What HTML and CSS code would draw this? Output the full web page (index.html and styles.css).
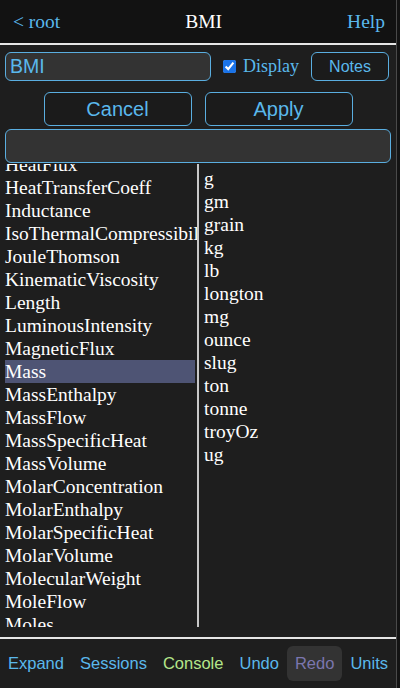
FILE: index.html
```html
<!DOCTYPE html>
<html>
<head>
<meta charset="utf-8">
<link rel="stylesheet" href="styles.css">
</head>
<body>
<div class="app">
  <header class="topbar">
    <span class="nav-link">&lt; root</span>
    <span class="title">BMI</span>
    <span class="nav-link">Help</span>
  </header>
  <div class="row-name">
    <input class="name-input" type="text" value="BMI">
    <input class="check" type="checkbox" checked>
    <span class="check-label">Display</span>
    <button class="btn btn-notes">Notes</button>
  </div>
  <div class="row-actions">
    <button class="btn btn-wide">Cancel</button>
    <button class="btn btn-wide">Apply</button>
  </div>
  <input class="search" type="text">
  <div class="lists">
    <div class="col-left">
      <ul class="list list-scrolled">
        <li>HeatFlux</li>
        <li>HeatTransferCoeff</li>
        <li>Inductance</li>
        <li>IsoThermalCompressibility</li>
        <li>JouleThomson</li>
        <li>KinematicViscosity</li>
        <li>Length</li>
        <li>LuminousIntensity</li>
        <li>MagneticFlux</li>
        <li class="selected">Mass</li>
        <li>MassEnthalpy</li>
        <li>MassFlow</li>
        <li>MassSpecificHeat</li>
        <li>MassVolume</li>
        <li>MolarConcentration</li>
        <li>MolarEnthalpy</li>
        <li>MolarSpecificHeat</li>
        <li>MolarVolume</li>
        <li>MolecularWeight</li>
        <li>MoleFlow</li>
        <li>Moles</li>
        <li>Power</li>
      </ul>
    </div>
    <div class="divider"></div>
    <div class="col-right">
      <ul class="list">
        <li>g</li>
        <li>gm</li>
        <li>grain</li>
        <li>kg</li>
        <li>lb</li>
        <li>longton</li>
        <li>mg</li>
        <li>ounce</li>
        <li>slug</li>
        <li>ton</li>
        <li>tonne</li>
        <li>troyOz</li>
        <li>ug</li>
      </ul>
    </div>
  </div>
  <footer class="toolbar">
    <span class="tool">Expand</span>
    <span class="tool">Sessions</span>
    <span class="tool tool-console">Console</span>
    <span class="tool">Undo</span>
    <span class="tool tool-redo">Redo</span>
    <span class="tool">Units</span>
  </footer>
</div>
</body>
</html>
```

FILE: styles.css
```css
html, body {
  margin: 0;
  padding: 0;
  background: #131313;
}
.app {
  width: 396px;
  height: 688px;
  background: #1e1e1e;
  border-right: 1px solid #4a4a4a;
  display: flex;
  flex-direction: column;
  font-family: "Liberation Serif", "Times New Roman", serif;
  color: #ffffff;
  overflow: hidden;
}
.topbar {
  height: 43px;
  background: #121212;
  border-bottom: 2px solid #e6e6e6;
  display: flex;
  align-items: center;
  justify-content: space-between;
  padding: 0 11px 0 13px;
  font-size: 19.5px;
  flex: none;
}
.nav-link { color: #5ab8ec; }
.title { color: #ffffff; }

.row-name {
  display: flex;
  align-items: center;
  margin-top: 7px;
  padding: 0 7px 0 5px;
  height: 29px;
  flex: none;
}
.name-input {
  box-sizing: border-box;
  width: 206px;
  height: 29px;
  background: #333333;
  border: 1px solid #5aaee0;
  border-radius: 6px;
  color: #5ab8ec;
  font-family: "Liberation Sans", Arial, sans-serif;
  font-size: 19.5px;
  padding: 0 4px;
  outline: none;
}
.check {
  width: 13px;
  height: 13px;
  margin: 0 0 0 12px;
  accent-color: #1a73e8;
}
.check-label {
  margin-left: 7px;
  color: #5ab8ec;
  font-size: 18px;
}
.btn {
  box-sizing: border-box;
  background: #1b1b1b;
  border: 1px solid #5aaee0;
  border-radius: 6px;
  color: #5ab8ec;
  font-family: "Liberation Sans", Arial, sans-serif;
  padding: 0;
}
.btn-notes {
  margin-left: auto;
  width: 78px;
  height: 29px;
  font-size: 16px;
}
.row-actions {
  display: flex;
  justify-content: center;
  gap: 13px;
  margin-top: 11px;
  flex: none;
}
.btn-wide {
  width: 148px;
  height: 34px;
  font-size: 20px;
}
.search {
  box-sizing: border-box;
  margin: 3px 5px 0 5px;
  width: 386px;
  height: 34px;
  background: #333333;
  border: 1px solid #5aaee0;
  border-radius: 6px;
  outline: none;
  flex: none;
}
.lists {
  display: flex;
  margin-top: 1px;
  height: 463px;
  flex: none;
}
.col-left {
  width: 192px;
  padding-left: 5px;
  overflow: hidden;
  flex: none;
}
.divider {
  width: 2px;
  background: #c8c8c8;
  flex: none;
}
.col-right {
  flex: 1;
  padding-left: 5px;
  padding-top: 3px;
  overflow: hidden;
}
.list {
  list-style: none;
  margin: 0;
  padding: 0;
  font-size: 19.5px;
  line-height: 23px;
  white-space: nowrap;
}
.list-scrolled { margin-top: -11px; }
.list li { height: 23px; }
.list li.selected {
  background: #4e5474;
  margin-right: 2px;
}
.toolbar {
  margin-top: 10px;
  border-top: 2px solid #e6e6e6;
  height: 49px;
  display: flex;
  align-items: center;
  font-family: "Liberation Sans", Arial, sans-serif;
  font-size: 16.5px;
  flex: none;
}
.tool {
  padding: 0 8px;
  height: 35px;
  line-height: 35px;
  color: #5ab8ec;
  border-radius: 6px;
}
.tool-console { color: #b4e68a; }
.tool-redo {
  color: #7b76ae;
  background: #333333;
}
```
